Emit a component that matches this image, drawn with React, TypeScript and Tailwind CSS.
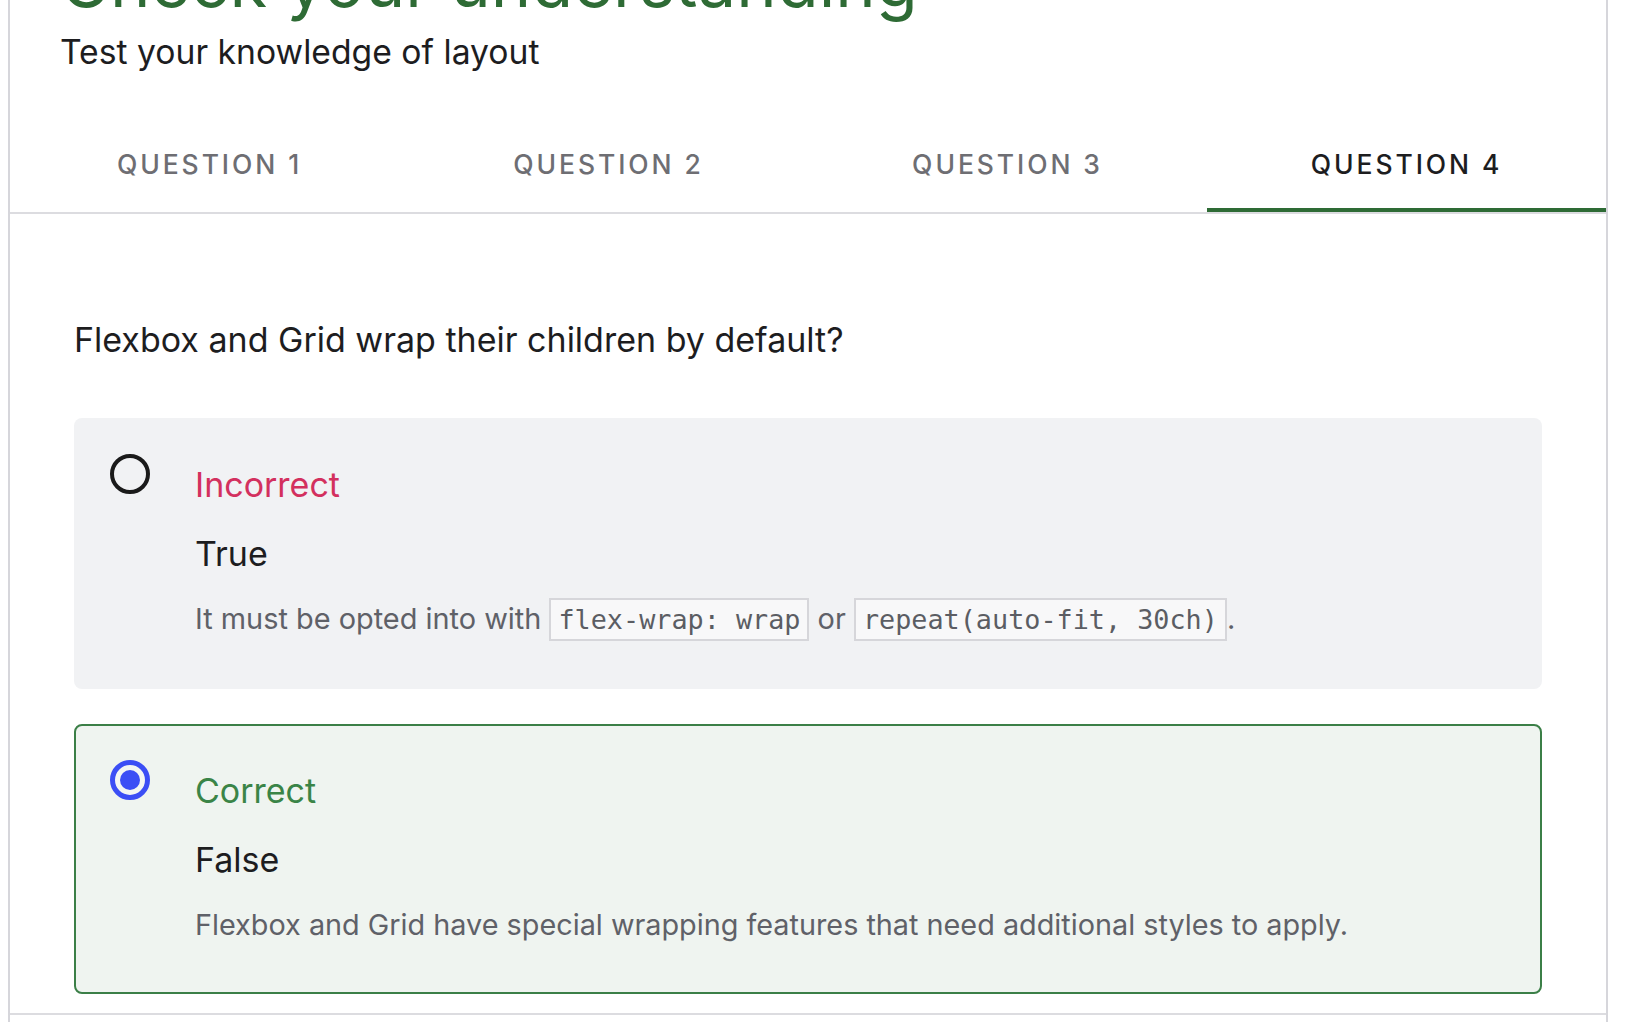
import React from "react";

const tabs = ["Question 1", "Question 2", "Question 3", "Question 4"];

function Code({ children }: { children: React.ReactNode }) {
  return (
    <code className="font-['DejaVu_Sans_Mono',monospace] text-[26.8px] text-[#5b5d63] bg-[#f8f8f9] border-2 border-[#d6d6da] px-[7px] py-[4px]">
      {children}
    </code>
  );
}

export default function App() {
  return (
    <div className="min-h-screen bg-white font-['Inter',sans-serif] overflow-hidden">
      <div className="ml-[8px] w-[1600px] min-h-[1100px] border-x-2 border-[#d6d6db]">
        <header className="pl-[50px] -mt-[57px]">
          <h1 className="text-[68.5px] leading-[80px] font-normal text-[#2e6b35]">
            Check your understanding
          </h1>
          <p className="mt-[9px] text-[33.7px] leading-[40px] text-[#1d1d1f]">
            Test your knowledge of layout
          </p>
        </header>

        <nav className="mt-[46px] grid grid-cols-4 border-b-2 border-[#dcdce0]">
          {tabs.map((t, i) => {
            const active = i === 3;
            return (
              <button
                key={t}
                className={
                  active
                    ? "h-[94px] pt-[4px] flex items-center justify-center border-b-4 border-[#2e6b35] text-[26.5px] font-medium uppercase tracking-[0.11em] text-[#1d1d1f]"
                    : "h-[94px] pt-[4px] flex items-center justify-center border-b-4 border-transparent text-[26.5px] font-medium uppercase tracking-[0.11em] text-[#6e6e73]"
                }
              >
                {t}
              </button>
            );
          })}
        </nav>

        <section className="px-[64px] pt-[106px] pb-[19px]">
          <h2 className="text-[34px] leading-[40px] font-normal text-[#1d1d1f]">
            Flexbox and Grid wrap their children by default?
          </h2>

          <div className="mt-[58px] flex flex-col gap-[35px]">
            <label className="flex gap-[45px] rounded-[8px] border-2 border-transparent bg-[#f1f2f4] pl-[34px] pr-[34px] pt-[34px] pb-[46px]">
              <span className="w-[40px] h-[40px] shrink-0 rounded-full border-[4px] border-[#1a1a1a]" />
              <span className="flex flex-col pt-[11px]">
                <span className="text-[34px] leading-[40px] text-[#d3305e]">Incorrect</span>
                <span className="mt-[29px] text-[34px] leading-[40px] text-[#1d1d1f]">True</span>
                <span className="mt-[24px] text-[28.9px] leading-[42px] text-[#5f6168]">
                  It must be opted into with <Code>flex-wrap: wrap</Code> or{" "}
                  <Code>repeat(auto-fit, 30ch)</Code>.
                </span>
              </span>
            </label>

            <label className="flex gap-[45px] rounded-[8px] border-2 border-[#3b7f47] bg-[#eff4f0] pl-[34px] pr-[34px] pt-[34px] pb-[46px]">
              <span className="w-[40px] h-[40px] shrink-0 rounded-full border-[5px] border-[#3b4ef5] bg-[#f3f6f3] flex items-center justify-center">
                <span className="w-[20px] h-[20px] rounded-full bg-[#3b4ef5]" />
              </span>
              <span className="flex flex-col pt-[11px]">
                <span className="text-[34px] leading-[40px] text-[#3a8447]">Correct</span>
                <span className="mt-[29px] text-[34px] leading-[40px] text-[#1d1d1f]">False</span>
                <span className="mt-[24px] text-[28.8px] leading-[42px] text-[#5f6168]">
                  Flexbox and Grid have special wrapping features that need additional styles to apply.
                </span>
              </span>
            </label>
          </div>
        </section>

        <div className="border-t-2 border-[#dcdce0] h-[40px]" />
      </div>
    </div>
  );
}
